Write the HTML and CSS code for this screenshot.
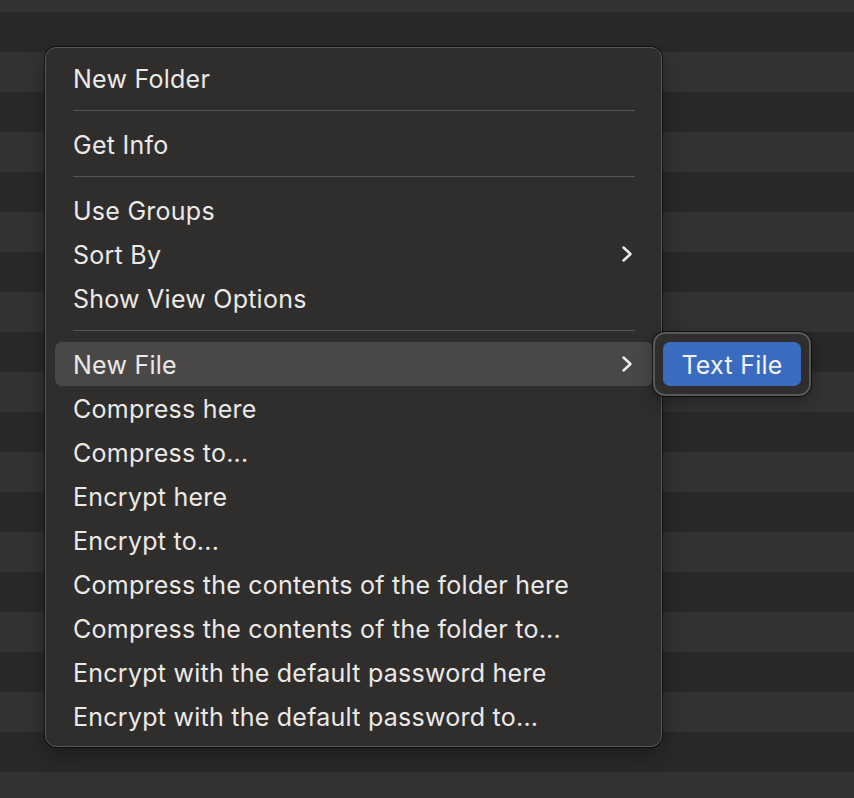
FILE: index.html
```html
<!DOCTYPE html>
<html lang="en">
<head>
<meta charset="utf-8">
<title>Context Menu</title>
<link rel="stylesheet" href="styles.css">
</head>
<body>
<div class="menu">
  <div class="item">New Folder</div>
  <div class="sep"></div>
  <div class="item">Get Info</div>
  <div class="sep"></div>
  <div class="item">Use Groups</div>
  <div class="item has-sub">Sort By
    <svg class="chev" width="13" height="18" viewBox="0 0 13 18"><polyline points="2.5,2.5 9.5,9 2.5,15.5" fill="none" stroke="currentColor" stroke-width="2.5" stroke-linecap="round" stroke-linejoin="round"/></svg>
  </div>
  <div class="item">Show View Options</div>
  <div class="sep"></div>
  <div class="item has-sub active">New File
    <svg class="chev" width="13" height="18" viewBox="0 0 13 18"><polyline points="2.5,2.5 9.5,9 2.5,15.5" fill="none" stroke="currentColor" stroke-width="2.5" stroke-linecap="round" stroke-linejoin="round"/></svg>
    <div class="submenu">
      <div class="sub-item">Text File</div>
    </div>
  </div>
  <div class="item">Compress here</div>
  <div class="item">Compress to...</div>
  <div class="item">Encrypt here</div>
  <div class="item">Encrypt to...</div>
  <div class="item">Compress the contents of the folder here</div>
  <div class="item">Compress the contents of the folder to...</div>
  <div class="item">Encrypt with the default password here</div>
  <div class="item">Encrypt with the default password to...</div>
</div>
</body>
</html>
```

FILE: styles.css
```css
html, body {
  margin: 0;
  height: 100%;
}
body {
  background-color: #2a2928;
  background-image: linear-gradient(to bottom, #2a2928 0 40px, #343332 40px 80px);
  background-size: 100% 80px;
  background-position: 0 12px;
  font-family: Inter, "Noto Sans", sans-serif;
  font-size: 25px;
  letter-spacing: 0.25px;
  color: #ebe9e7;
  padding: 47px 0 0 45px;
  box-sizing: border-box;
}
.menu {
  width: 617px;
  box-sizing: border-box;
  background: #302e2c;
  border: 1px solid #5a5856;
  border-radius: 11px;
  box-shadow: 0 0 0 1px rgba(0,0,0,0.55), 0 8px 24px rgba(0,0,0,0.35);
  padding: 8px 8px 8px 9px;
}
.item {
  position: relative;
  height: 44px;
  box-sizing: border-box;
  padding: 2px 18px 0 18px;
  display: flex;
  align-items: center;
  border-radius: 7px;
}
.item.active {
  background: #4a4846;
}
.chev {
  margin-left: auto;
  color: #ebe9e7;
  margin-right: 1px;
  margin-top: -2px;
}
.sep {
  height: 1px;
  background: #585654;
  margin: 10px 18px 11px 18px;
}
.submenu {
  position: absolute;
  left: 100%;
  top: -10px;
  width: 138px;
  padding: 8px;
  background: #302e2c;
  border: 2px solid #5a5856;
  border-radius: 12px;
  box-shadow: 0 0 0 1px rgba(0,0,0,0.6), 0 6px 18px rgba(0,0,0,0.35);
}
.sub-item {
  height: 44px;
  box-sizing: border-box;
  padding-top: 2px;
  display: flex;
  align-items: center;
  justify-content: center;
  background: #3a6bbf;
  border-radius: 7px;
  color: #f2f4f8;
}
```
